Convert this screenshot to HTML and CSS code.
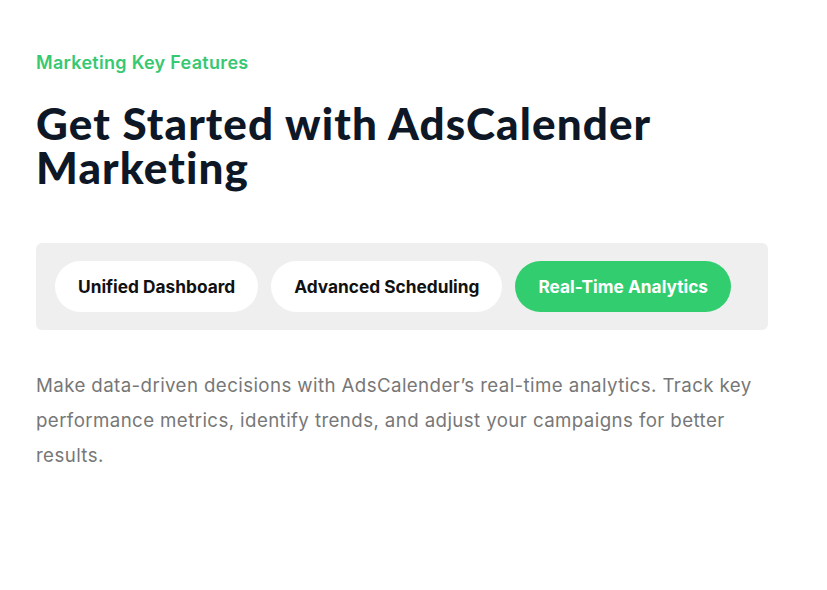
FILE: index.html
```html
<!DOCTYPE html>
<html lang="en">
<head>
    <meta charset="UTF-8">
    <meta name="viewport" content="width=device-width, initial-scale=1.0">
    <title>AdsCalender Marketing Features</title>
    <link rel="stylesheet" href="styles.css">
</head>
<body>
    <div class="features">
        <div class="eyebrow">Marketing Key Features</div>
        <h1 class="title">Get Started with AdsCalender Marketing</h1>
        <div class="tabs">
            <button class="tab">Unified Dashboard</button>
            <button class="tab">Advanced Scheduling</button>
            <button class="tab active">Real-Time Analytics</button>
        </div>
        <p class="description">Make data-driven decisions with AdsCalender’s real-time analytics. Track key performance metrics, identify trends, and adjust your campaigns for better results.</p>
    </div>
</body>
</html>
```

FILE: styles.css
```css
body {
    margin: 0;
    padding: 0;
    background: #ffffff;
    font-family: Inter, "Noto Sans", sans-serif;
}
.features {
    width: 732px;
    padding: 51px 0 0 36px;
}
.eyebrow {
    font-size: 18px;
    line-height: 24px;
    font-weight: 600;
    letter-spacing: 0.3px;
    color: #37c872;
}
.title {
    margin: 26px 0 0;
    width: 660px;
    font-family: Lato, sans-serif;
    font-size: 44px;
    line-height: 44px;
    font-weight: 900;
    letter-spacing: 1.1px;
    color: #0e1726;
}
.tabs {
    display: flex;
    gap: 13px;
    margin-top: 54px;
    padding: 18px 19px;
    background: #efefef;
    border-radius: 6px;
}
.tab {
    height: 51px;
    padding: 0 23px;
    border: none;
    border-radius: 26px;
    background: #ffffff;
    color: #111111;
    font-family: Inter, sans-serif;
    font-size: 17.3px;
    font-weight: 700;
    cursor: pointer;
}
.tab.active {
    background: #32cd6f;
    color: #ffffff;
}
.description {
    margin: 38px 0 0;
    font-size: 18.7px;
    line-height: 35px;
    letter-spacing: 0.4px;
    color: #777777;
}
```
